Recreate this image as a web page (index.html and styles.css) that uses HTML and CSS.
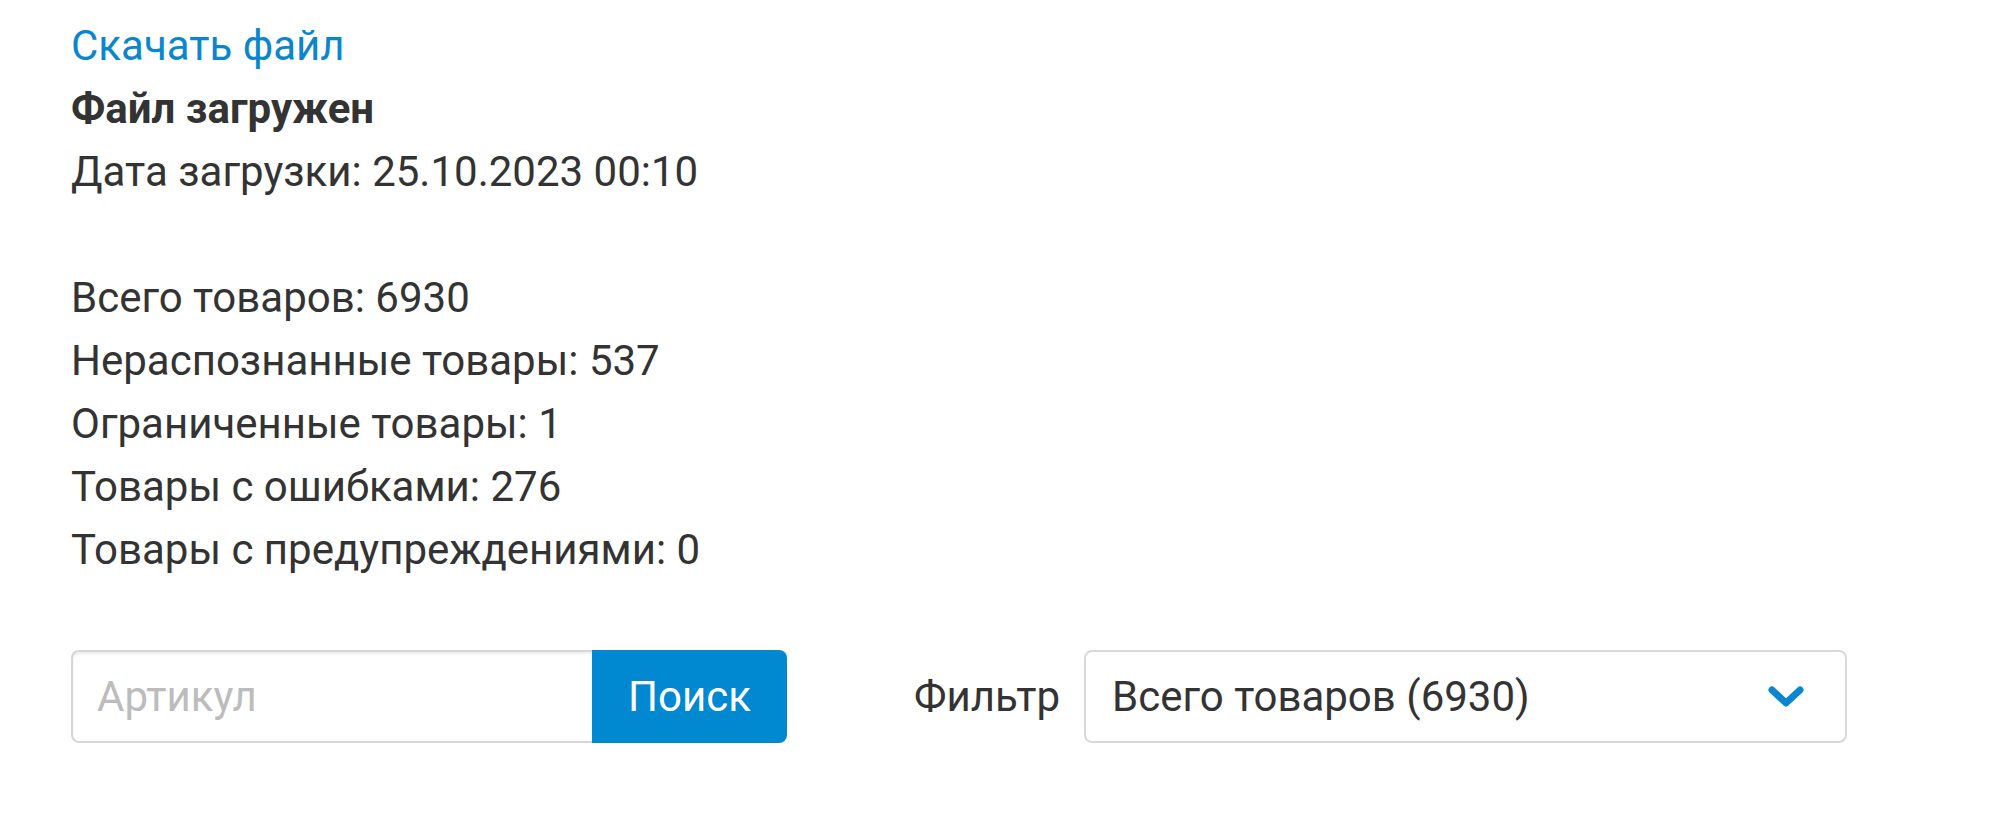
FILE: index.html
```html
<!DOCTYPE html>
<html lang="ru">
<head>
<meta charset="utf-8">
<title>Файл загружен</title>
<link rel="stylesheet" href="styles.css">
</head>
<body>
<div class="page">
  <div class="info">
    <a class="link" href="#">Скачать файл</a>
    <div class="title">Файл загружен</div>
    <div>Дата загрузки: 25.10.2023 00:10</div>
    <div class="blank"></div>
    <div>Всего товаров: 6930</div>
    <div>Нераспознанные товары: 537</div>
    <div>Ограниченные товары: 1</div>
    <div>Товары с ошибками: 276</div>
    <div>Товары с предупреждениями: 0</div>
  </div>
  <div class="controls">
    <div class="search">
      <input class="search-input" type="text" placeholder="Артикул">
      <button class="search-btn" type="button">Поиск</button>
    </div>
    <div class="filter">
      <span class="filter-label">Фильтр</span>
      <div class="select">
        <span class="select-value">Всего товаров (6930)</span>
        <svg class="chevron" width="36" height="22" viewBox="0 0 36 22"><path d="M4 4 L18 17 L32 4" fill="none" stroke="#0a86cf" stroke-width="7" stroke-linecap="round" stroke-linejoin="round"/></svg>
      </div>
    </div>
  </div>
</div>
</body>
</html>
```
FILE: styles.css
```css
html, body {
  margin: 0;
  padding: 0;
  background: #fff;
}
body {
  font-family: Roboto, "Noto Sans", sans-serif;
  font-size: 42px;
  color: #333;
}
.page {
  padding: 14px 0 0 71px;
}
.info {
  line-height: 63px;
}
.info > div, .info > a {
  display: block;
}
.blank {
  height: 63px;
}
.link {
  color: #0a86cf;
  text-decoration: none;
}
.title {
  font-weight: 700;
}
.controls {
  display: flex;
  align-items: center;
  margin-top: 69px;
}
.search {
  display: flex;
  height: 93px;
}
.search-input {
  box-sizing: border-box;
  width: 521px;
  height: 93px;
  margin: 0;
  border: 2px solid #d6d6d6;
  border-right: none;
  border-radius: 8px 0 0 8px;
  box-shadow: inset 0 2px 3px rgba(0,0,0,0.08);
  padding: 0 24px;
  font-family: Roboto, "Noto Sans", sans-serif;
  font-size: 42px;
  color: #333;
  outline: none;
}
.search-input::placeholder {
  color: #bcbcbc;
}
.search-btn {
  box-sizing: border-box;
  width: 195px;
  height: 93px;
  margin: 0;
  border: none;
  border-radius: 0 8px 8px 0;
  background: #0088d1;
  color: #fff;
  font-family: Roboto, "Noto Sans", sans-serif;
  font-size: 42px;
  padding: 0;
}
.filter {
  display: flex;
  align-items: center;
  margin-left: 127px;
}
.filter-label {
  margin-right: 24px;
}
.select {
  box-sizing: border-box;
  width: 763px;
  height: 93px;
  border: 2px solid #d9d9d9;
  border-radius: 8px;
  display: flex;
  align-items: center;
  justify-content: space-between;
  padding: 0 41px 0 26px;
}
.chevron {
  display: block;
}
```
